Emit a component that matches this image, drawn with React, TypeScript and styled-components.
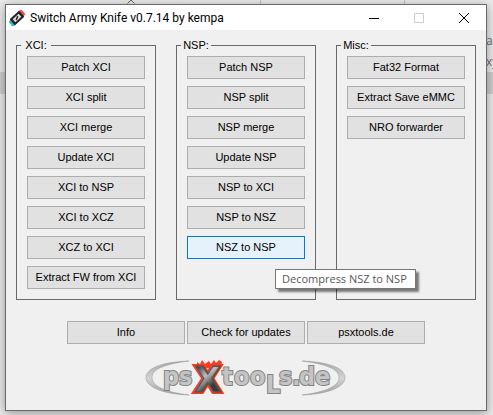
import React from "react";
import styled, { createGlobalStyle } from "styled-components";

const GlobalStyle = createGlobalStyle`
  * { box-sizing: border-box; }
  body { margin: 0; background: #ebebeb; overflow: hidden; }
`;

const Desktop = styled.div`
  position: relative;
  min-height: 100vh;
  padding: 4px 6px 4px 5px;
  background: #ebebeb;
`;

const Band = styled.div`
  position: absolute;
  top: 72px;
  left: 0;
  right: 0;
  height: 22px;
  background: #cfcfcf;
`;

const ColumnLine = styled.div<{ $left: number }>`
  position: absolute;
  top: 0;
  left: ${(p) => p.$left}px;
  width: 1px;
  height: 4px;
  background: #c4c4c4;
`;

const BackText = styled.span<{ $top: number }>`
  position: absolute;
  top: ${(p) => p.$top}px;
  left: calc(100% - 7px);
  font: 12px/16px "Open Sans", sans-serif;
  color: #6d6d6d;
`;

const SortMark = styled.svg`
  position: absolute;
  top: 0;
  left: 126px;
`;

const Window = styled.main`
  position: relative;
  border: 1px solid #6a6a6a;
  background: #f0f0f0;
  box-shadow: 0 2px 10px rgba(0, 0, 0, 0.38);
  font: 11px/13px "Liberation Sans", Arial, sans-serif;
  color: #000;
`;

const TitleBar = styled.header`
  display: flex;
  align-items: center;
  height: 25px;
  padding-left: 3px;
  background: #fff;
`;

const Title = styled.h1`
  flex: 1;
  margin: 0 0 0 5px;
  font: 12px/16px Roboto, sans-serif;
  white-space: nowrap;
`;

const CaptionButton = styled.button`
  display: grid;
  place-items: center;
  width: 45px;
  height: 25px;
  padding: 0;
  border: 0;
  background: transparent;
`;

const Groups = styled.div`
  display: grid;
  grid-template-columns: repeat(3, 1fr);
  gap: 20px;
  padding: 9px 10px 0;
`;

const Group = styled.fieldset`
  display: flex;
  min-width: 0;
  min-height: 261px;
  margin: 0;
  padding: 4px 10px 10px;
  border: 1px solid #696969;
`;

const Legend = styled.legend`
  display: flex;
  justify-content: center;
  width: 30px;
  margin-left: -6px;
  padding: 0;
`;

const Stack = styled.div`
  display: flex;
  flex: 1;
  flex-direction: column;
  gap: 7px;
  min-width: 0;
`;

const Button = styled.button<{ $active?: boolean }>`
  height: 23px;
  padding: 0;
  border: 1px solid ${(p) => (p.$active ? "#0078d7" : "#adadad")};
  border-radius: 0;
  background: ${(p) => (p.$active ? "#e5f1fb" : "#e1e1e1")};
  color: #000;
  font: inherit;
  white-space: nowrap;
`;

const Footer = styled.footer`
  display: grid;
  grid-template-columns: repeat(3, 1fr);
  gap: 2px;
  padding: 21px 61px 0;
`;

const LogoRow = styled.div`
  display: flex;
  justify-content: center;
  padding: 15px 0 12px;
`;

const Tooltip = styled.div`
  position: absolute;
  top: 264px;
  left: 269px;
  padding: 0 8px 0 6px;
  border: 1px solid #767676;
  background: #fff;
  box-shadow: 3px 3px 2px rgba(0, 0, 0, 0.5);
  color: #575757;
  font: 11px/18px "Open Sans", sans-serif;
  white-space: nowrap;
`;

const groups = [
  {
    name: "XCI:",
    actions: ["Patch XCI", "XCI split", "XCI merge", "Update XCI", "XCI to NSP", "XCI to XCZ", "XCZ to XCI", "Extract FW from XCI"],
  },
  {
    name: "NSP:",
    actions: ["Patch NSP", "NSP split", "NSP merge", "Update NSP", "NSP to XCI", "NSP to NSZ", "NSZ to NSP"],
  },
  { name: "Misc:", actions: ["Fat32 Format", "Extract Save eMMC", "NRO forwarder"] },
];
const hovered = "NSZ to NSP";

const AppIcon = () => (
  <svg width="16" height="16" viewBox="0 0 16 16" aria-hidden="true">
    <g transform="rotate(-42 8 8)">
      <rect x="-1" y="5" width="6" height="7" rx="2" fill="#27b8d6" />
      <rect x="11" y="4" width="6" height="7" rx="2" fill="#ed5350" />
      <rect x="1.5" y="4" width="13" height="8" rx="1" fill="#252222" />
      <rect x="4" y="6" width="8" height="4" fill="#e2e0e0" />
      <path d="M6 9l4-2" stroke="#252222" strokeWidth="1.500" />
    </g>
  </svg>
);

const Logo = () => (
  <svg width="202" height="39" viewBox="0 0 202 39" role="img" aria-label="psXtools.de">
    <defs>
      <linearGradient id="steel" x1="0" y1="0" x2="0" y2="1">
        <stop offset="0" stopColor="#a5a5a5" />
        <stop offset="0.5" stopColor="#d4d4d4" />
        <stop offset="1" stopColor="#a0a0a0" />
      </linearGradient>
      <linearGradient id="dark" x1="0" y1="0" x2="0.5" y2="1">
        <stop offset="0.2" stopColor="#444" />
        <stop offset="0.5" stopColor="#c0c0c0" />
        <stop offset="0.8" stopColor="#3a3a3a" />
      </linearGradient>
      <filter id="glow" x="-30%" y="-30%" width="160%" height="160%">
        <feGaussianBlur stdDeviation="0.6" />
      </filter>
    </defs>
    <g fill="url(#steel)" stroke="#a0a0a0" strokeWidth="0.6">
      <path d="M44 2C15 3 1 10 1 18.500S15 35 44 36C20 33 7 27 7 18.500S20 5 44 2Z" />
      <path d="M157 2C186 3 200 10 200 18.500S186 35 157 36C181 33 194 27 194 18.500S181 5 157 2Z" />
    </g>
    <g
      fontFamily="'DejaVu Sans Condensed','DejaVu Sans',sans-serif"
      fontWeight="700"
      fontSize="25"
      fill="#c4c4c4"
      stroke="#838383"
      strokeWidth="2"
      paintOrder="stroke"
    >
      <text x="18" y="26">ps</text>
      <text x="77 89 105" y="26">too</text>
      <text x="121" y="34">L</text>
      <text x="134 147 154 170" y="26">s.de</text>
    </g>
    <path d="M52 9l0-6 3 2 2-4 3 4 4-3 2 3 3-4 2 3 3-3 3 2-1 6Z" fill="#fa3c22" filter="url(#glow)" />
    <g fontFamily="'Liberation Sans',sans-serif" fontWeight="700" fontSize="35">
      <text x="51" y="32" stroke="#fb3b1d" strokeWidth="6" fill="#fb3b1d" filter="url(#glow)">X</text>
      <text x="51" y="32" stroke="#555" strokeWidth="3" paintOrder="stroke" fill="url(#dark)">X</text>
    </g>
  </svg>
);

export default function App() {
  return (
    <Desktop>
      <GlobalStyle />
      <Band />
      <ColumnLine $left={260} />
      <ColumnLine $left={404} />
      <SortMark width="10" height="4" aria-hidden="true">
        <path d="M1.500 3.500L5 0l3.500 3.500" fill="none" stroke="#666" />
      </SortMark>
      <BackText $top={33}>a</BackText>
      <BackText $top={54}>xy</BackText>
      <Window>
        <TitleBar>
          <AppIcon />
          <Title>Switch Army Knife v0.7.14 by kempa</Title>
          <CaptionButton aria-label="Minimize">
            <svg width="10" height="10"><path d="M0 5.500h10" stroke="#000" /></svg>
          </CaptionButton>
          <CaptionButton aria-label="Maximize" disabled>
            <svg width="10" height="10"><path d="M.5.5h9v9h-9z" fill="none" stroke="#ccc" /></svg>
          </CaptionButton>
          <CaptionButton aria-label="Close">
            <svg width="10" height="10"><path d="M0 0l10 10M10 0L0 10" stroke="#000" /></svg>
          </CaptionButton>
        </TitleBar>
        <Groups>
          {groups.map((group) => (
            <Group key={group.name}>
              <Legend>{group.name}</Legend>
              <Stack>
                {group.actions.map((action) => (
                  <Button key={action} $active={action === hovered}>{action}</Button>
                ))}
              </Stack>
            </Group>
          ))}
        </Groups>
        <Footer>
          <Button>Info</Button>
          <Button>Check for updates</Button>
          <Button>psxtools.de</Button>
        </Footer>
        <LogoRow><Logo /></LogoRow>
        <Tooltip role="tooltip">Decompress NSZ to NSP</Tooltip>
      </Window>
    </Desktop>
  );
}
